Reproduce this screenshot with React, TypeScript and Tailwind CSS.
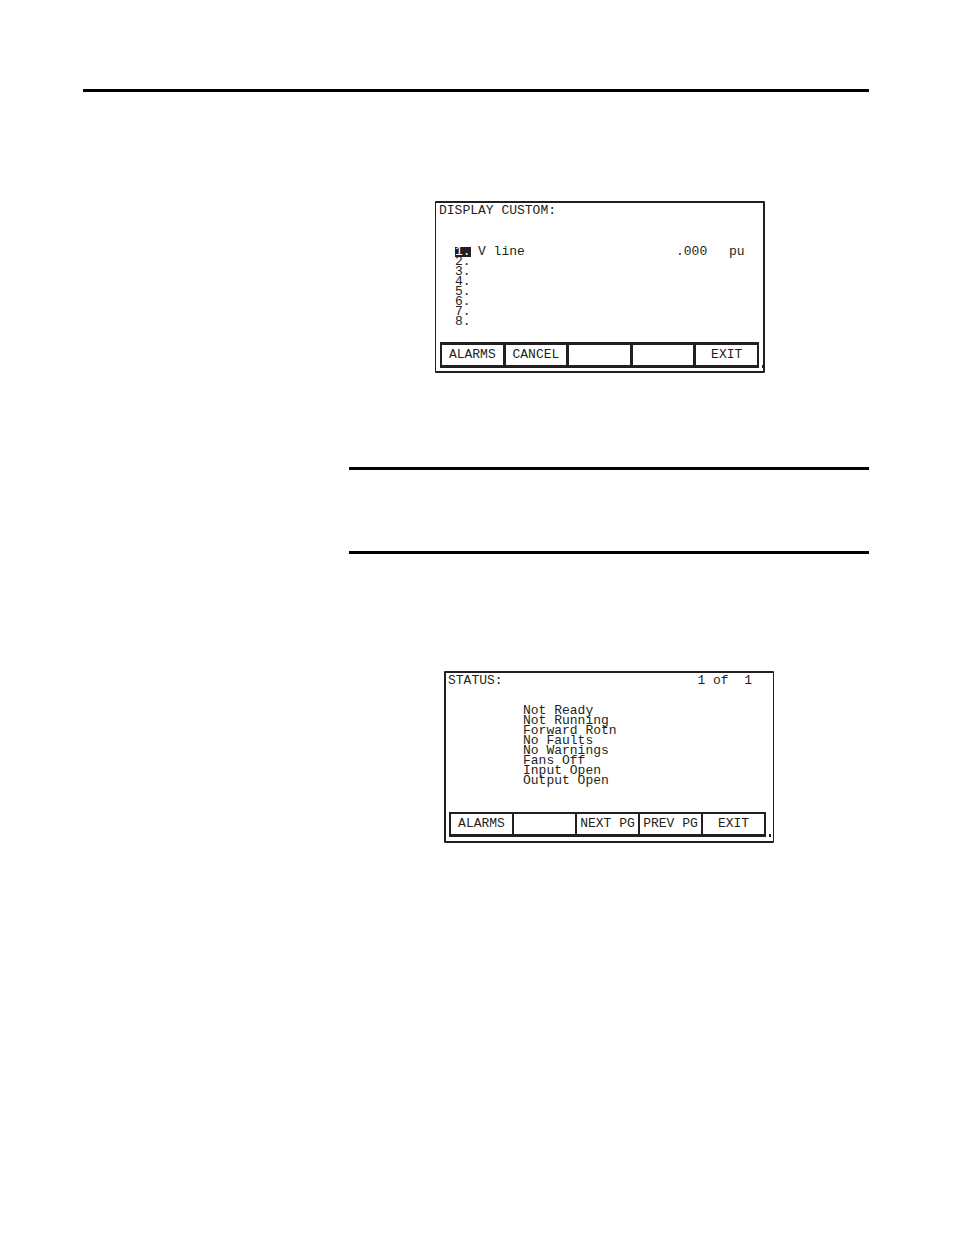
import clsx from "clsx";

const customItems = [
  { id: 1, name: "V line", value: ".000", unit: "pu" },
  { id: 2 },
  { id: 3 },
  { id: 4 },
  { id: 5 },
  { id: 6 },
  { id: 7 },
  { id: 8 },
];

const statusItems = [
  "Not Ready",
  "Not Running",
  "Forward Rotn",
  "No Faults",
  "No Warnings",
  "Fans Off",
  "Input Open",
  "Output Open",
];

type SoftKeysProps = {
  keys: string[];
  className: string;
};

// Row of five function keys at the bottom of a terminal screen
function SoftKeys({ keys, className }: SoftKeysProps) {
  return (
    <div className={`grid grid-cols-5 bg-[#231f20] ${className}`}>
      {keys.map((label, index) => (
        <button
          key={index}
          type="button"
          disabled={!label}
          aria-label={label || `F${index + 1}`}
          className="bg-white whitespace-nowrap text-center leading-4"
        >
          {label}
        </button>
      ))}
    </div>
  );
}

function CustomScreen() {
  const selectedId = 1;

  return (
    <section className="relative ml-[86px] flex h-[172px] w-[330px] flex-col rounded-[1px] border-2 border-l border-[#231f20]">
      <h2 className="px-[3px] leading-4">DISPLAY CUSTOM:</h2>
      <ol className="mt-7 pl-[19px]">
        {customItems.map((item) => (
          <li key={item.id} className="flex h-[10px]">
            <span
              className={clsx(
                "h-[10px] w-4",
                item.id === selectedId && "bg-[#231f20] text-white"
              )}
            >
              {item.id}.
            </span>
            <span className="ml-[7px] w-[198px]">{item.name}</span>
            <span className="w-[53px]">{item.value}</span>
            <span>{item.unit}</span>
          </li>
        ))}
      </ol>
      <SoftKeys
        keys={["ALARMS", "CANCEL", "", "", "EXIT"]}
        className="mt-auto mr-1 mb-[3px] ml-1 h-[26px] gap-x-[3px] px-[2px] py-[3px]"
      />
      <span className="absolute right-[-1px] bottom-[3px] h-[3px] w-[2px] bg-[#231f20]" />
    </section>
  );
}

function StatusScreen() {
  return (
    <section className="relative ml-[95px] flex h-[172px] w-[330px] flex-col rounded-[1px] border-2 border-r border-[#231f20]">
      <div className="flex justify-between pr-[21px] pl-[2px] leading-4">
        <h2>STATUS:</h2>
        <p className="whitespace-pre">1 of  1</p>
      </div>
      <ul className="mt-[17px] pl-[77px]">
        {statusItems.map((item) => (
          <li key={item} className="h-[10px]">
            {item}
          </li>
        ))}
      </ul>
      <SoftKeys
        keys={["ALARMS", "", "NEXT PG", "PREV PG", "EXIT"]}
        className="mt-auto mr-[7px] mb-1 ml-[3px] h-[25px] gap-x-[2px] px-[2px] pt-[2px] pb-[3px]"
      />
      <span className="absolute right-[2px] bottom-1 h-[3px] w-[2px] bg-[#231f20]" />
    </section>
  );
}

export default function App() {
  return (
    <main className="min-h-screen bg-white pt-[89px] pr-[85px] pl-[83px] font-['Liberation_Mono',monospace] text-[13px] leading-[10px] text-[#231f20]">
      <hr className="border-0 border-t-3 border-black" />

      {/* Right hand column of the manual page */}
      <div className="ml-[266px] pt-[109px]">
        <CustomScreen />
        <hr className="mt-[94px] border-0 border-t-3 border-black" />
        <hr className="mt-[81px] mb-[117px] border-0 border-t-3 border-black" />
        <StatusScreen />
      </div>
    </main>
  );
}
